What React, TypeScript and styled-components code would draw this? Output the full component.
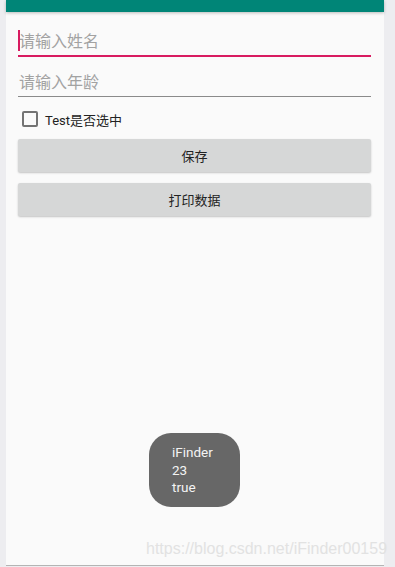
import React, { useState } from 'react';
import styled, { createGlobalStyle } from 'styled-components';

const GlobalStyle = createGlobalStyle`
	html, body {
		margin: 0;
		padding: 0;
		background: #ededf0;
	}
	* {
		box-sizing: border-box;
	}
`;

const Page = styled.div`
	position: relative;
	display: flex;
	width: 395px;
	height: 567px;
	padding-left: 6px;
	background: #ededf0;
	font-family: Roboto, 'Noto Sans CJK SC', sans-serif;
	overflow: hidden;
`;

const Screen = styled.div`
	position: relative;
	display: flex;
	flex-direction: column;
	width: 378px;
	height: 566px;
	background: #fafafa;
	border-bottom: 1px solid #b4b4b4;
`;

const StatusBar = styled.div`
	height: 12px;
	flex-shrink: 0;
	background: #008577;
	box-shadow: 0 1px 3px rgba(0, 0, 0, 0.25);
`;

const Content = styled.div`
	display: flex;
	flex-direction: column;
	padding: 13px 13px 0 12px;
`;

const Field = styled.div<{ $focused?: boolean }>`
	position: relative;
	display: flex;
	align-items: flex-end;
	height: ${(p) => (p.$focused ? '32px' : '31px')};
	margin-top: ${(p) => (p.$focused ? '0' : '9px')};
	padding-bottom: 3px;
	border-bottom: ${(p) => (p.$focused ? '2px solid #d81b60' : '1px solid #8a8a8a')};
`;

const Caret = styled.span`
	position: absolute;
	left: 0;
	bottom: 4px;
	width: 1.5px;
	height: 21px;
	background: #d81b60;
`;

const Input = styled.input`
	width: 100%;
	height: 20px;
	padding: 0 0 0 1px;
	border: none;
	outline: none;
	background: transparent;
	font-family: Roboto, 'Noto Sans CJK SC', sans-serif;
	font-size: 16px;
	line-height: 20px;
	color: #222;
	caret-color: transparent;

	&::placeholder {
		color: #a2a2a2;
	}
`;

const CheckRow = styled.label`
	display: flex;
	align-items: center;
	height: 24px;
	margin-top: 10px;
	padding-left: 4px;
	cursor: pointer;
`;

const Box = styled.span<{ $checked: boolean }>`
	width: 16px;
	height: 16px;
	border: 2px solid #737373;
	border-radius: 2px;
	background: ${(p) => (p.$checked ? '#d81b60' : 'transparent')};
	border-color: ${(p) => (p.$checked ? '#d81b60' : '#737373')};
`;

const CheckText = styled.span`
	margin-left: 7px;
	font-size: 13px;
	color: #222;
`;

const HiddenCheckBox = styled.input`
	display: none;
`;

const Button = styled.button<{ $gap: number }>`
	height: 33px;
	margin-top: ${(p) => p.$gap}px;
	border: none;
	border-radius: 2px;
	background: #d6d7d7;
	box-shadow: 0 1px 2px rgba(0, 0, 0, 0.22);
	font-family: Roboto, 'Noto Sans CJK SC', sans-serif;
	font-size: 13px;
	color: #222;
	cursor: pointer;
`;

const Toast = styled.div`
	position: absolute;
	left: 143px;
	top: 433px;
	width: 91px;
	height: 74px;
	padding: 11px 0 0 23px;
	border-radius: 22px;
	background: #676767;
	color: #f4f4f4;
	font-family: Roboto, sans-serif;
	font-size: 13.5px;
	line-height: 17.5px;
	white-space: pre-line;
`;

const Watermark = styled.div`
	position: absolute;
	left: 146px;
	top: 539px;
	font-family: 'Liberation Sans', Arial, sans-serif;
	font-size: 16px;
	line-height: 20px;
	color: #e2e2e2;
	pointer-events: none;
	white-space: nowrap;
`;

export default function App() {
	const [name, setName] = useState('');
	const [age, setAge] = useState('');
	const [checked, setChecked] = useState(false);

	return (
		<Page>
			<GlobalStyle />
			<Screen>
				<StatusBar />
				<Content>
					<Field $focused>
						<Caret />
						<Input placeholder="请输入姓名" value={name} onChange={(e) => setName(e.target.value)} />
					</Field>
					<Field>
						<Input placeholder="请输入年龄" value={age} onChange={(e) => setAge(e.target.value)} />
					</Field>
					<CheckRow>
						<Box $checked={checked} />
						<CheckText>Test是否选中</CheckText>
						<HiddenCheckBox
							type="checkbox"
							checked={checked}
							onChange={() => setChecked(!checked)}
						/>
					</CheckRow>
					<Button $gap={8}>保存</Button>
					<Button $gap={11}>打印数据</Button>
				</Content>
				<Toast>{'iFinder\n23\ntrue'}</Toast>
			</Screen>
			<Watermark>https://blog.csdn.net/iFinder00159</Watermark>
		</Page>
	);
}
